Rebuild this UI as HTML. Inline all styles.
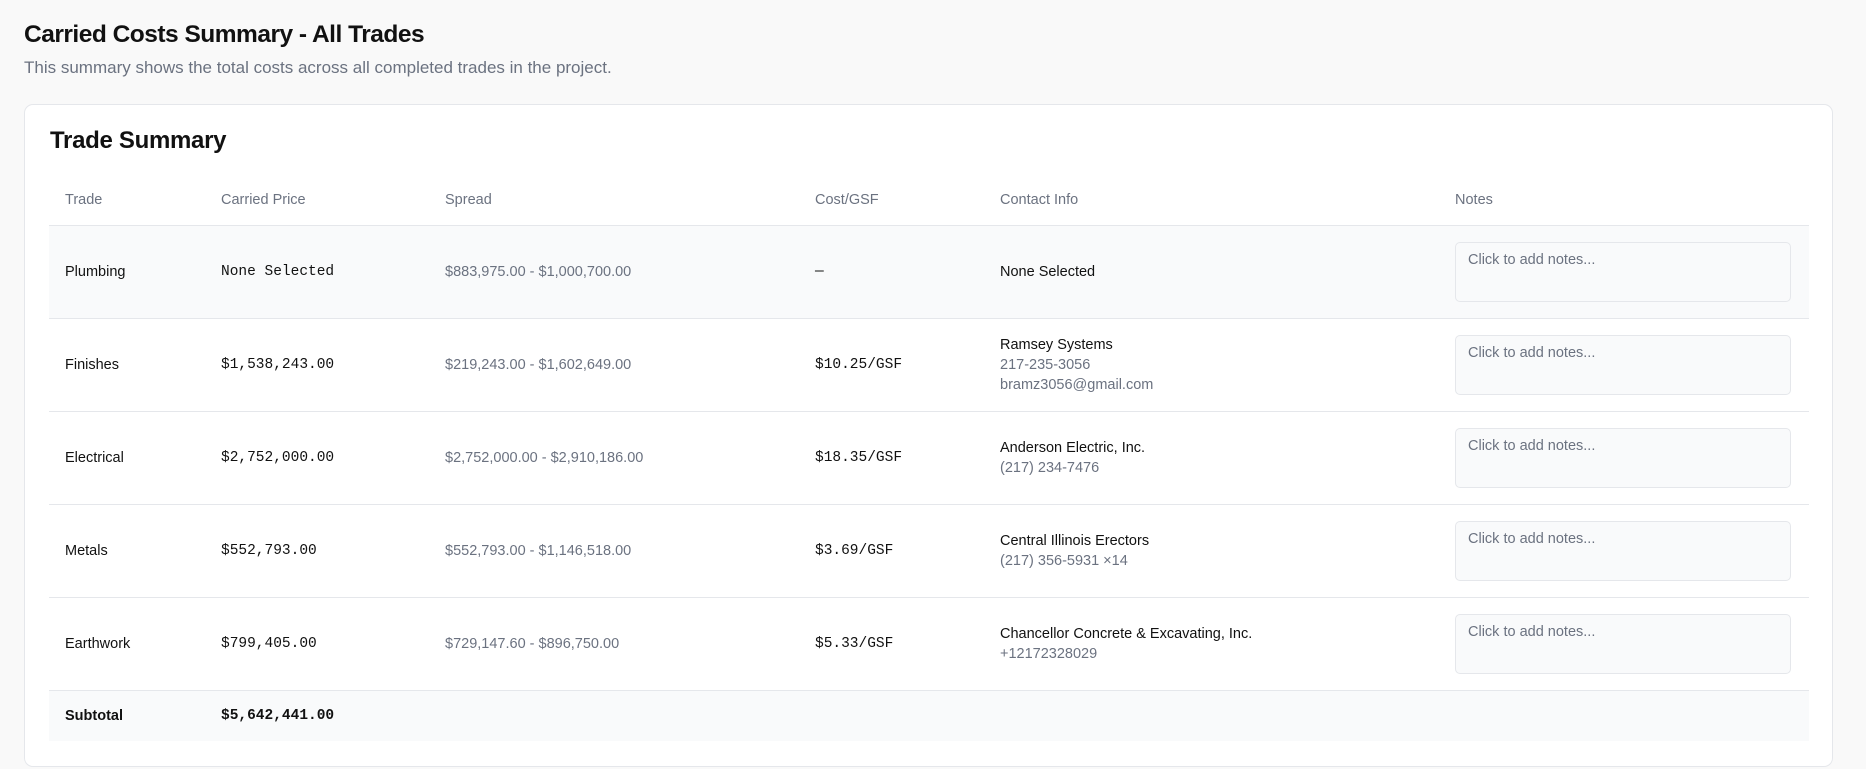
<!DOCTYPE html>
<html><head><meta charset="utf-8"><style>
*{box-sizing:border-box;margin:0;padding:0}
body{width:1866px;height:769px;background:#f9f9f9;font-family:"Liberation Sans",sans-serif;color:#111;overflow:hidden;position:relative}
h1{position:absolute;left:24px;top:21px;font-size:24.5px;font-weight:700;letter-spacing:-0.5px}
.sub{position:absolute;left:24px;top:58px;font-size:17px;color:#6b7280}
.card{position:absolute;left:24px;top:104px;width:1809px;height:663px;background:#fff;border:1px solid #e5e7eb;border-radius:9px}
h2{position:absolute;left:25px;top:22px;font-size:24px;font-weight:700;letter-spacing:-0.3px}
table{position:absolute;left:24px;top:71px;width:1760px;border-collapse:collapse;font-size:14.5px;table-layout:fixed}
th{font-weight:400;color:#6b7280;text-align:left;height:49px;border-bottom:1px solid #e5e7eb;font-size:14.5px}
td{height:93px;border-bottom:1px solid #e5e7eb;vertical-align:middle}
th:first-child,td:first-child{padding-left:16px}
.m{font-family:"Liberation Mono",monospace;font-size:14.5px}
.g{color:#6b7280}
.gray{background:#f9fafb}
.n{width:336px;height:60px;background:#f9fafb;border:1px solid #e5e7eb;border-radius:5px;color:#6b7280;padding:9px 12px;font-size:14.5px}
.c div{line-height:20px}
tr.s td{height:51px;border-bottom:none;font-weight:700}
</style></head><body>
<h1>Carried Costs Summary - All Trades</h1>
<div class="sub">This summary shows the total costs across all completed trades in the project.</div>
<div class="card">
<h2>Trade Summary</h2>
<table>
<colgroup><col style="width:172px"><col style="width:224px"><col style="width:370px"><col style="width:185px"><col style="width:455px"><col></colgroup>
<tr><th>Trade</th><th>Carried Price</th><th>Spread</th><th>Cost/GSF</th><th>Contact Info</th><th>Notes</th></tr>
<tr class="gray"><td>Plumbing</td><td class="m">None Selected</td><td class="g">$883,975.00 - $1,000,700.00</td><td class="m">—</td><td>None Selected</td><td><div class="n">Click to add notes...</div></td></tr>
<tr><td>Finishes</td><td class="m">$1,538,243.00</td><td class="g">$219,243.00 - $1,602,649.00</td><td class="m">$10.25/GSF</td><td class="c"><div>Ramsey Systems</div><div class="g">217-235-3056</div><div class="g">bramz3056@gmail.com</div></td><td><div class="n">Click to add notes...</div></td></tr>
<tr><td>Electrical</td><td class="m">$2,752,000.00</td><td class="g">$2,752,000.00 - $2,910,186.00</td><td class="m">$18.35/GSF</td><td class="c"><div>Anderson Electric, Inc.</div><div class="g">(217) 234-7476</div></td><td><div class="n">Click to add notes...</div></td></tr>
<tr><td>Metals</td><td class="m">$552,793.00</td><td class="g">$552,793.00 - $1,146,518.00</td><td class="m">$3.69/GSF</td><td class="c"><div>Central Illinois Erectors</div><div class="g">(217) 356-5931 ×14</div></td><td><div class="n">Click to add notes...</div></td></tr>
<tr><td>Earthwork</td><td class="m">$799,405.00</td><td class="g">$729,147.60 - $896,750.00</td><td class="m">$5.33/GSF</td><td class="c"><div>Chancellor Concrete &amp; Excavating, Inc.</div><div class="g">+12172328029</div></td><td><div class="n">Click to add notes...</div></td></tr>
<tr class="s gray"><td>Subtotal</td><td class="m">$5,642,441.00</td><td></td><td></td><td></td><td></td></tr>
</table>
</div>
</body></html>
